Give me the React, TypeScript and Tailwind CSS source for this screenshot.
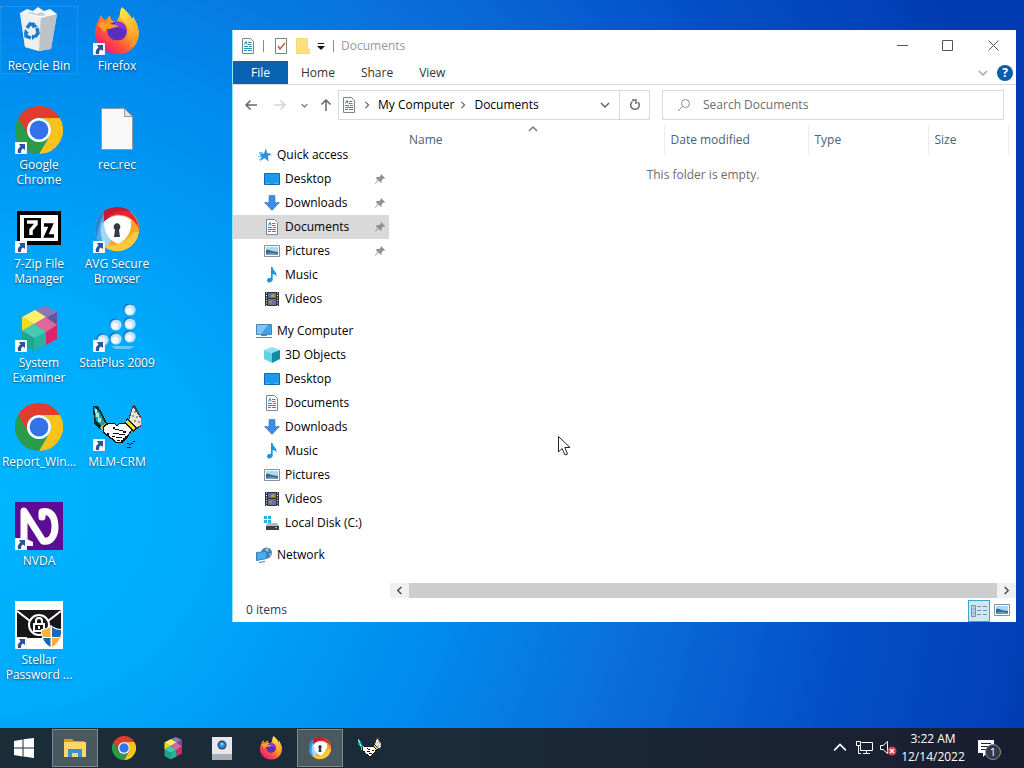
import type { ReactNode } from "react";
import clsx from "clsx";

type IconProps = { className?: string };

const Chrome = ({ className }: IconProps) => (
  <svg viewBox="0 0 48 48" className={className}>
    <path fill="#e33b2e" d="M3.2 12A24 24 0 0 1 44.8 12H24A12 12 0 0 0 13.6 30Z" />
    <path fill="#fcc21b" d="M44.8 12A24 24 0 0 1 24 48L34.4 30A12 12 0 0 0 24 12Z" />
    <path fill="#2a9b48" d="M24 48A24 24 0 0 1 3.2 12L13.6 30A12 12 0 0 0 34.4 30Z" />
    <circle cx="24" cy="24" r="12" fill="#fff" />
    <circle cx="24" cy="24" r="9.4" fill="#3273ea" />
  </svg>
);

const Firefox = ({ className }: IconProps) => (
  <svg viewBox="0 0 48 48" className={className}>
    <defs>
      <linearGradient id="fxBody" x1="0.85" y1="0.1" x2="0.2" y2="0.95">
        <stop offset="0" stopColor="#ffe23c" />
        <stop offset="0.4" stopColor="#ff9a28" />
        <stop offset="0.7" stopColor="#ff4f3f" />
        <stop offset="1" stopColor="#e7187c" />
      </linearGradient>
      <linearGradient id="fxTail" x1="0" y1="0" x2="0.6" y2="1">
        <stop offset="0" stopColor="#fff04a" />
        <stop offset="1" stopColor="#ff9a28" />
      </linearGradient>
    </defs>
    <path fill="url(#fxBody)" d="M8 8C9 11 11 13 13 13L17 8C17 12 19 14 23 15C26 12 27 6 29 1C35 4 36 9 38 12L40 11C46 18 48 28 43 37C38 45 31 48 23 47C10 46 2 37 2 26C2 19 5 15 8 8Z" />
    <path fill="url(#fxTail)" d="M29 0C26 5 26 10 31 14C37 19 38 26 35 32C39 29 40 24 39 20C43 28 41 36 36 41C46 35 48 22 42 13L40 9L40 14C38 8 34 5 29 0Z" />
    <path fill="#5a2fc0" d="M14 22C16 16 22 13 28 15C33 17 35 23 33 28C31 33 26 34 21 33C16 31 14 27 14 22Z" />
    <path fill="#8c38d6" d="M22 15C27 13 33 17 33 24C30 20 26 21 22 20Z" />
    <path fill="#ff9b2b" d="M5 18C8 13 14 15 17 17C21 18 24 17 25 20C20 20 19 22 15 22C13 22 12 23 11 25C9 23 7 20 5 18Z" />
  </svg>
);

const Avg = ({ className }: IconProps) => (
  <svg viewBox="0 0 48 48" className={className}>
    <circle cx="24" cy="24" r="22" fill="#f7a52e" />
    <path fill="#4aa9e8" d="M24 24L13 5A22 22 0 0 0 8 39.500Z" />
    <path fill="#9fd6f3" d="M24 24L9 17C6 27 8 36 14 43Z" />
    <path fill="#2d82d6" d="M13 5A22 22 0 0 0 4 33C5 22 8 13 13 5Z" />
    <path fill="#fbc93c" d="M8 39C22 43 33 38 40 27L46 27A22 22 0 0 1 10 41Z" />
    <path fill="#e5233c" d="M11 6C21 -1 43 1 46 24C42 15 36 11 28 10C22 9 17 11 11 17Z" />
    <path fill="#c31a36" d="M11 6C20 0 32 1 38 7C29 4 18 6 11 17Z" />
    <path fill="#fff" d="M11 17C18 9 31 9 38 15C39 26 35 34 25 39C16 35 11 28 11 17Z" />
    <path fill="#333a40" d="M24 18A4 4 0 0 1 26 25L27 32H21L22 25A4 4 0 0 1 24 18Z" />
  </svg>
);

const Hexagon = ({ className }: IconProps) => (
  <svg viewBox="0 0 48 48" className={className}>
    <path fill="#8f77b5" d="M20 6L30 2L42 8L31 14Z" />
    <path fill="#5f55a0" d="M31 14L42 8V21Z" />
    <path fill="#fff06a" d="M7 13L20 6L31 13L19 20Z" />
    <path fill="#f2dc1c" d="M7 13L19 20L7 27Z" />
    <path fill="#e0679c" d="M19 20L31 13L42 21L31 28Z" />
    <path fill="#dd2468" d="M31 28L42 21V35L31 41Z" />
    <path fill="#46c9b1" d="M7 27L19 20L31 28L19 34Z" />
    <path fill="#1da58e" d="M7 27L19 34V47L7 40Z" />
    <path fill="#26b59c" d="M19 34L31 28V41L19 47Z" />
  </svg>
);

const Handshake = ({ className }: IconProps) => (
  <svg viewBox="0 0 48 48" shapeRendering="crispEdges" className={className}>
    <path fill="#0a2c2e" d="M0 3H5L8 8L11 14L14 20L11 26H6L1 20Z" />
    <path fill="#19a19a" d="M1 4L6 8L9 14L12 20L9 23L3 18Z" />
    <path fill="#9df0e5" d="M2 6H4V10H6V15H8V19H5V14H3V10H2Z" />
    <path fill="#444" d="M40 2H42L49 16V23L44 26L35 20L36 13Z" />
    <path fill="#e9e6dc" d="M40 4L48 16V22L44 24L36 18Z" />
    <path fill="#999" d="M41 8H43V10H41ZM39 12H41V14H39ZM43 13H45V15H43ZM41 17H43V19H41ZM45 18H47V20H45Z" />
    <path fill="#222" d="M34 15L44 25L40 29L32 20Z" />
    <path fill="#f3df20" d="M34 17L42 25L40 27L33 20Z" />
    <path fill="#d9c11c" d="M7 24L13 20L14 23L9 27Z" />
    <path fill="#111" d="M10 23L15 20H21L24 22L27 20H33L39 27L35 34L29 40H22L18 36L10 30Z" />
    <path fill="#fff" d="M11 24L16 21H21L24 23L27 21H32L38 27L34 33H32V35H30V37H28V39H23L19 35L11 29Z" />
    <path fill="#111" d="M20 24H22V26H20ZM22 26H26V27H22ZM26 27H30V28H26ZM30 28H33V30H30ZM20 30H26V31H20ZM26 31H32V32H26ZM19 33H22V34H19ZM23 34H29V35H23ZM24 37H27V38H24ZM14 30H16V32H14Z" />
    <path fill="#123" d="M34 40H36V41H34ZM36 41H38V42H36ZM38 40H40V41H38ZM40 38H42V39H40ZM34 44H38V45H34Z" />
  </svg>
);

const RecycleBin = ({ className }: IconProps) => (
  <svg viewBox="0 0 48 48" className={className}>
    <path fill="#d5dade" d="M5 6L42 7L36 42L24 44L10 40Z" />
    <path fill="#eceff0" d="M5 6L26 10L24 44L10 40Z" />
    <path fill="#bcc3c8" d="M26 10L42 7L36 42L24 44Z" />
    <path fill="#f6f7f7" d="M5 6L12 2L18 4L23 0L29 4L35 2L42 7L26 11Z" />
    <path fill="#c3ced5" d="M12 6L17 5L21 7L27 5L31 8L25 9Z" />
    <path fill="none" stroke="#1c7ccc" strokeWidth="3.500" d="M12 21L15 17L20 18M22 21L23 26L20 30M16 31L11 29L11 25" />
    <path fill="#1c7ccc" d="M18 15L23 20L17 21ZM23 28L17 33L17 28ZM9 27L10 22L14 26Z" />
  </svg>
);

const SevenZip = ({ className }: IconProps) => (
  <svg viewBox="0 0 48 48" className={className}>
    <path fill="#000" d="M2 6H46V40H2Z" />
    <path fill="#fff" d="M5 10H43V36H5Z" />
    <path fill="#000" d="M9 13H26V33H9Z" />
    <path fill="none" stroke="#fff" strokeWidth="3.500" d="M12 17H21V19L16 25V30" />
    <path fill="none" stroke="#000" strokeWidth="3.500" d="M29 20H36L31 31H39" />
  </svg>
);

const Stats = ({ className }: IconProps) => (
  <svg viewBox="0 0 48 48" className={className}>
    {[[37, 6], [23, 21], [37, 20], [10, 36], [23, 35], [37, 33]].map(([x, y]) => (
      <g key={`${x}-${y}`}>
        <circle cx={x - 1} cy={y - 1} r="5.500" fill="#1565b0" />
        <circle cx={x} cy={y} r="5.600" fill="#bfe2f8" />
        <circle cx={x - 1} cy={y + 1} r="3.500" fill="#f0f9ff" />
      </g>
    ))}
    <path fill="#5fcaff" d="M18 42H42L37 45H22Z" />
  </svg>
);

const Nvda = ({ className }: IconProps) => (
  <svg viewBox="0 0 48 48" className={className}>
    <path fill="#5c0d94" d="M0 0H48V48H0Z" />
    <path fill="none" stroke="#fff" strokeWidth="7" strokeLinecap="round" strokeLinejoin="round" d="M9 38V9L28 39C36 41 40 33 40 25C40 14 35 8 27 10V15" />
    <path fill="#fff" d="M12 37L18 40V44H12Z" />
  </svg>
);

const Stellar = ({ className }: IconProps) => (
  <svg viewBox="0 0 48 48" className={className}>
    <path fill="#fff" d="M0 0H48V48H0Z" />
    <path fill="#171717" d="M2 9H46V37H2Z" />
    <path fill="none" stroke="#fff" strokeWidth="2" d="M2 10L15 20M46 10L33 20" />
    <circle cx="24" cy="24" r="10" fill="#171717" stroke="#fff" strokeWidth="2" />
    <path fill="none" stroke="#fff" strokeWidth="2" d="M19 23H29V30H19ZM21 23V20A3 3 0 0 1 27 20V23M24 25V28" />
    <path fill="#fff" d="M26 28C30 28 34 26 36 24C38 26 42 28 47 28C47 38 43 44 36 48C29 44 26 38 26 28Z" />
    <path fill="#f9b234" d="M27 29C30 29 33 27 35.500 26V36H28C27 34 27 31 27 29Z" />
    <path fill="#1667bd" d="M37 26C39 28 42 29 46 29C46 32 46 34 45 36H37ZM28 37H35.500V46C32 44 29 41 28 37Z" />
    <path fill="#f9b234" d="M37 37H45C43 41 41 44 37 46Z" />
  </svg>
);

const BlankFile = ({ className }: IconProps) => (
  <svg viewBox="0 0 48 48" className={className}>
    <path fill="#f9f9f9" stroke="#8c9aa5" d="M8.500 2.500H31.500L39.500 10.500V43.500H8.500Z" />
    <path fill="#dde2e6" stroke="#8c9aa5" d="M31.500 2.500V10.500H39.500Z" />
  </svg>
);

const DocIcon = ({ className = "size-4" }: IconProps) => (
  <svg viewBox="0 0 16 16" className={className}>
    <path fill="#fff" stroke="#7b858c" d="M2.500 .5H10.500L13.500 3.500V15.500H2.500Z" />
    <path stroke="#2b8fb8" d="M8 4.500H11.500M8 6.500H11.500M4 8.500H8M9 8.500H12M4 10.500H12M4 12.500H7M8 12.500H12" />
    <path fill="none" stroke="#2b7fa8" d="M4.500 6.500L6 3.500L7 6.500" />
  </svg>
);

const DesktopIcon = () => (
  <svg viewBox="0 0 16 16" className="size-4">
    <path fill="#1b9cf0" stroke="#1667a8" d="M.5 2.500H15.500V13.500H.5Z" />
    <path stroke="#8fd3ff" strokeDasharray="1 1" d="M2 12.500H5M11 12.500H14" />
  </svg>
);

const DownloadIcon = () => (
  <svg viewBox="0 0 16 16" className="size-4">
    <path fill="#3d8ee0" stroke="#3478bc" strokeWidth=".6" d="M5 .5H11V7.500H15.500L8 15.500L.5 7.500H5Z" />
  </svg>
);

const PictureIcon = () => (
  <svg viewBox="0 0 16 16" className="size-4">
    <path fill="#fff" stroke="#85929c" d="M.5 2.500H15.500V13.500H.5Z" />
    <path fill="#a9d7f5" d="M2 4H14V12H2Z" />
    <path fill="#38658c" d="M2 7C5 6 7 9 14 9V12H2Z" />
    <path fill="#7798b0" d="M2 11C6 9 10 10 14 11V12H2Z" />
  </svg>
);

const MusicIcon = () => (
  <svg viewBox="0 0 16 16" className="size-4">
    <path fill="#1c94db" d="M7 0H8.500C9 4 13 4 12.500 10C12 8 10.500 7 8.700 7V13C8 16 3 16.500 3 13.500C3 11 6 10.500 7 11Z" />
  </svg>
);

const VideoIcon = () => (
  <svg viewBox="0 0 16 16" className="size-4">
    <path fill="#30343a" d="M1 1H15V15H1Z" />
    <path fill="#5a6fa5" d="M4 2H12V7H4Z" />
    <path fill="#6b6f9c" d="M4 8H12V14H4Z" />
    <path fill="#c89a3a" d="M7 4L10 3L11 6H7ZM5 11L8 10L7 13Z" />
    <path stroke="#eee" strokeDasharray="1 1.500" d="M2.500 1.500V15M13.500 1.500V15" />
  </svg>
);

const CubeIcon = () => (
  <svg viewBox="0 0 16 16" className="size-4">
    <path fill="#8be2f1" d="M0 3L8 0L16 3L8 6Z" />
    <path fill="#5fd3e6" d="M0 3L8 6V16L0 12Z" />
    <path fill="#128ca8" d="M8 6L16 3V12L8 16Z" />
  </svg>
);

const DiskIcon = () => (
  <svg viewBox="0 0 16 16" className="size-4">
    <path fill="#27b3d6" d="M0 1H3V4H0ZM4 1H7V4H4ZM0 5H3V8H0ZM4 5H7V8H4Z" />
    <path fill="#b4b8ba" d="M3 8H13L15 11H2Z" />
    <path fill="#3d4244" d="M2 11H15V15H2Z" />
    <path fill="#61e08a" d="M11 12H13V13H11Z" />
  </svg>
);

const StarIcon = () => (
  <svg viewBox="0 0 16 16" className="size-4">
    <path fill="#2f8fdd" d="M10 1L11 6L16 7L12 9L12.500 14.500L8.500 11L4 14L5.500 9.500L3 6.500H8Z" />
    <path stroke="#79b9ea" d="M2 9.500H6M3 12.500H5M3 5.500H7" />
  </svg>
);

const ComputerIcon = () => (
  <svg viewBox="0 0 16 16" className="size-4">
    <path fill="#3ba2ec" stroke="#4b87b5" d="M.5 1.500H15.500V11.500H.5Z" />
    <path fill="#7cc7fa" d="M1 2H12L5 11H1Z" />
    <path stroke="#6b7f8e" d="M5 12.500H11M0 14.500H16" />
  </svg>
);

const NetworkIcon = () => (
  <svg viewBox="0 0 16 16" className="size-4">
    <circle cx="10.500" cy="6" r="5.500" fill="#4c7fa8" />
    <path fill="#8cc4ea" d="M9 2L12 1L13 4L10 5ZM13 7L16 6L14 10Z" />
    <path fill="#48aef2" stroke="#3f7dab" d="M.5 5.500L10.500 4.500V11.500L.5 13.500Z" />
    <path stroke="#3f7dab" d="M3 15.500L9 14.500" />
  </svg>
);

const PinIcon = () => (
  <svg viewBox="0 0 12 12" className="size-3">
    <path fill="#8b949b" d="M7 1L11 5L10 6L9 5.500L7.500 8L7.500 10L6 9L4 7.500L1.500 11L1 10.500L3.500 7L2 5L2.500 4L5 4L7 2.500L6.500 1.500Z" />
  </svg>
);

const Chevron = ({ className, d = "M1 3L5 7L9 3" }: IconProps & { d?: string }) => (
  <svg viewBox="0 0 10 10" fill="none" stroke="currentColor" strokeWidth="1.500" className={clsx("shrink-0", className)}>
    <path d={d} />
  </svg>
);

const Shortcut = () => (
  <svg viewBox="0 0 12 12" className="absolute bottom-0 left-0 size-3">
    <path fill="#fff" stroke="#b9c4cf" strokeWidth=".5" d="M0 0H12V12H0Z" />
    <path fill="#29549b" d="M4 2H10V8L8 6.500C6 7.500 6 9 6 11H3C2 8 3.500 6 5.500 4.500Z" />
  </svg>
);

const desktopIcons = [
  { name: "Recycle Bin", icon: RecycleBin, plain: true, focused: true },
  { name: "Google Chrome", icon: Chrome },
  { name: "7-Zip File Manager", icon: SevenZip },
  { name: "System Examiner", icon: Hexagon },
  { name: "Report_Win...", icon: Chrome, plain: true },
  { name: "NVDA", icon: Nvda },
  { name: "Stellar Password ...", icon: Stellar },
  { name: "Firefox", icon: Firefox },
  { name: "rec.rec", icon: BlankFile, plain: true },
  { name: "AVG Secure Browser", icon: Avg },
  { name: "StatPlus 2009", icon: Stats },
  { name: "MLM-CRM", icon: Handshake },
];

const sections = [
  {
    name: "Quick access",
    icon: <StarIcon />,
    items: [
      { name: "Desktop", icon: <DesktopIcon />, pinned: true },
      { name: "Downloads", icon: <DownloadIcon />, pinned: true },
      { name: "Documents", icon: <DocIcon />, pinned: true, active: true },
      { name: "Pictures", icon: <PictureIcon />, pinned: true },
      { name: "Music", icon: <MusicIcon /> },
      { name: "Videos", icon: <VideoIcon /> },
    ],
  },
  {
    name: "My Computer",
    icon: <ComputerIcon />,
    items: [
      { name: "3D Objects", icon: <CubeIcon /> },
      { name: "Desktop", icon: <DesktopIcon /> },
      { name: "Documents", icon: <DocIcon /> },
      { name: "Downloads", icon: <DownloadIcon /> },
      { name: "Music", icon: <MusicIcon /> },
      { name: "Pictures", icon: <PictureIcon /> },
      { name: "Videos", icon: <VideoIcon /> },
      { name: "Local Disk (C:)", icon: <DiskIcon /> },
    ],
  },
  { name: "Network", icon: <NetworkIcon />, items: [] },
] as {
  name: string;
  icon: ReactNode;
  items: { name: string; icon: ReactNode; pinned?: boolean; active?: boolean }[];
}[];

const DesktopIcons = () => (
  <div className="grid shrink-0 grid-flow-col grid-cols-[78px_78px] grid-rows-[repeat(7,99px)]">
    {desktopIcons.map(({ name, icon: Icon, plain, focused }) => (
      <button key={name} className="flex flex-col items-center pt-[6px] text-center">
        <span className={clsx("flex w-full flex-col items-center border", focused ? "border-dotted border-[#7d8a94]" : "border-transparent")}>
          <span className="relative">
            <Icon className="size-12" />
            {!plain && <Shortcut />}
          </span>
          <span className="mt-[3px] max-w-[76px] leading-[15px] text-white [text-shadow:0_1px_2px_rgba(0,0,0,0.6)]">
            {name}
          </span>
        </span>
      </button>
    ))}
  </div>
);

const TitleBar = () => (
  <header className="flex h-[31px] items-center pl-[7px]">
    <DocIcon />
    <span className="ml-[7px] h-3 w-px bg-[#8a8a8a]" />
    <button aria-label="Properties" className="ml-[9px]">
      <svg viewBox="0 0 16 16" className="size-4">
        <path fill="#fff" stroke="#7b7f86" d="M2.500 .5H13.500V15.500H2.500Z" />
        <path fill="none" stroke="#c45c38" strokeWidth="1.500" d="M5 8L7 11L12 5" />
      </svg>
    </button>
    <button aria-label="New folder" className="ml-[7px]">
      <svg viewBox="0 0 16 16" className="size-4">
        <path fill="#ffdf7e" stroke="#eec75c" strokeWidth=".6" d="M.5 .5H11.500V10L13.500 11V15.500H.5Z" />
      </svg>
    </button>
    <button aria-label="Customize toolbar" className="ml-[5px]">
      <svg viewBox="0 0 8 8" className="size-2">
        <path fill="#111" d="M1 1H7V2H1ZM0 4H8L4 8Z" />
      </svg>
    </button>
    <span className="ml-2 h-3 w-px bg-[#8a8a8a]" />
    <h1 className="ml-[7px] text-[#999]">Documents</h1>
    <div className="ml-auto flex h-full text-[#555]">
      <button aria-label="Minimize" className="grid w-[45px] place-items-center">
        <svg viewBox="0 0 11 11" fill="none" stroke="currentColor" className="size-[11px]">
          <path d="M0 5.500H11" />
        </svg>
      </button>
      <button aria-label="Maximize" className="grid w-[45px] place-items-center">
        <svg viewBox="0 0 11 11" fill="none" stroke="currentColor" className="size-[11px]">
          <path d="M.5 .5H10.500V10.500H.5Z" />
        </svg>
      </button>
      <button aria-label="Close" className="grid w-[46px] place-items-center">
        <svg viewBox="0 0 11 11" fill="none" stroke="currentColor" className="size-[11px]">
          <path d="M.5 .5L10.500 10.500M10.500 .5L.5 10.500" />
        </svg>
      </button>
    </div>
  </header>
);

const Ribbon = () => (
  <div className="flex h-6 items-stretch border-b border-[#dadbdc] text-[#333]">
    <button className="w-[55px] bg-[#0763b1] text-white">File</button>
    <button className="px-[13px]">Home</button>
    <button className="px-[13px]">Share</button>
    <button className="px-[13px]">View</button>
    <div className="ml-auto flex items-center gap-[9px] pr-[3px]">
      <button aria-label="Expand ribbon" className="text-[#a5a5a5]">
        <Chevron className="size-[10px]" />
      </button>
      <button aria-label="Help" className="size-4 rounded-full bg-[#0a5ca8] text-[12px] leading-4 font-bold text-white">
        ?
      </button>
    </div>
  </div>
);

const AddressRow = () => (
  <div className="flex h-[35px] items-end pr-3 pl-1 text-[#666]">
    <div className="flex h-[30px] items-center">
      <button aria-label="Back" className="grid w-7 place-items-center">
        <svg viewBox="0 0 12 12" fill="none" stroke="#666" strokeWidth="1.500" className="size-3">
          <path d="M12 6H1M5.500 1.500L1 6L5.500 10.500" />
        </svg>
      </button>
      <button aria-label="Forward" className="grid w-[30px] place-items-center">
        <svg viewBox="0 0 12 12" fill="none" stroke="#d2d2d2" strokeWidth="1.500" className="size-3">
          <path d="M0 6H11M6.500 1.500L11 6L6.500 10.500" />
        </svg>
      </button>
      <button aria-label="Recent locations" className="grid w-[18px] place-items-center">
        <Chevron className="size-[7px]" />
      </button>
      <button aria-label="Up" className="grid w-[25px] place-items-center">
        <svg viewBox="0 0 12 12" fill="none" stroke="#666" strokeWidth="1.500" className="size-3">
          <path d="M6 12V1M1.500 5.500L6 1L10.500 5.500" />
        </svg>
      </button>
    </div>
    <div className="flex h-[30px] flex-1 items-center border border-[#d9d9d9] pl-[2px]">
      <DocIcon />
      <Chevron className="ml-[6px] size-2" d="M3 1L7 5L3 9" />
      <button className="ml-[7px] whitespace-nowrap text-black">My Computer</button>
      <Chevron className="ml-[5px] size-2" d="M3 1L7 5L3 9" />
      <button className="ml-[7px] text-black">Documents</button>
      <button aria-label="Previous locations" className="mr-[9px] ml-auto">
        <Chevron className="size-[10px]" />
      </button>
      <button aria-label="Refresh" className="grid h-full w-[30px] place-items-center border-l border-[#d9d9d9]">
        <svg viewBox="0 0 12 12" fill="none" stroke="#666" strokeWidth="1.500" className="size-3">
          <path d="M3.500 2.500A4.300 4.300 0 1 0 9 3M3 1H7V5" />
        </svg>
      </button>
    </div>
    <label className="ml-3 flex h-[30px] w-[342px] items-center border border-[#d9d9d9] pl-[14px]">
      <svg viewBox="0 0 14 14" fill="none" stroke="#8b8b8b" className="size-[14px]">
        <circle cx="8.500" cy="5.500" r="4" />
        <path d="M5.500 8.500L1 13" />
      </svg>
      <input type="search" aria-label="Search Documents" placeholder="Search Documents" className="ml-3 min-w-0 flex-1 outline-none placeholder:text-[#6d6d6d]" />
    </label>
  </div>
);

const NavPane = () => (
  <nav className="w-[157px] shrink-0 pt-[23px] pr-px text-black">
    {sections.map((section) => (
      <div key={section.name} className="mb-2">
        <a href="#" className="flex h-6 items-center gap-[5px] pl-[23px]">
          {section.icon}
          {section.name}
        </a>
        {section.items.map((item) => (
          <a key={item.name} href="#" className={clsx("flex h-6 items-center gap-[5px] pr-[3px] pl-[31px] whitespace-nowrap", item.active && "bg-[#d9d9d9]")}>
            {item.icon}
            <span className="flex-1">{item.name}</span>
            {item.pinned && <PinIcon />}
          </a>
        ))}
      </div>
    ))}
  </nav>
);

const FileList = () => (
  <section className="flex min-w-0 flex-1 flex-col pt-[5px]">
    <table className="w-full table-fixed border-collapse text-left">
      <thead>
        <tr className="h-[30px] text-[#4c607a]">
          <th className="relative border-r border-[#ececec] pl-[19px] font-normal">
            Name
            <Chevron className="absolute top-0 left-[138px] size-[10px] text-[#777]" d="M1 6L5 2L9 6" />
          </th>
          <th className="w-36 border-r border-[#ececec] pl-[6px] font-normal">Date modified</th>
          <th className="w-[120px] border-r border-[#ececec] pl-[6px] font-normal">Type</th>
          <th className="w-20 border-r border-[#ececec] pl-[6px] font-normal">Size</th>
          <th className="w-2" aria-hidden="true" />
        </tr>
      </thead>
      <tbody>
        <tr className="h-10">
          <td colSpan={5} className="text-center text-[#6d6d6d]">This folder is empty.</td>
        </tr>
      </tbody>
    </table>
    <div className="mt-auto flex h-[15px] items-stretch bg-[#f0f0f0] text-[#444]">
      <button aria-label="Scroll left" className="grid w-[19px] place-items-center">
        <Chevron className="size-[9px]" d="M7 1L3 5L7 9" />
      </button>
      <div className="flex-1 bg-[#cdcdcd]" />
      <button aria-label="Scroll right" className="grid w-[19px] place-items-center">
        <Chevron className="size-[9px]" d="M3 1L7 5L3 9" />
      </button>
    </div>
  </section>
);

const StatusBar = () => (
  <footer className="flex h-6 items-end pr-2 pl-[13px] text-[#1e3a63]">
    <span className="flex-1 pb-1">0 items</span>
    <button aria-label="Details view" className="grid size-[22px] place-items-center border border-[#3ba5cf] bg-[#cce8f6]">
      <svg viewBox="0 0 16 14" fill="none" className="h-[14px] w-4">
        <path stroke="#7f8d99" d="M.5 1.500H4.500V12.500H.5ZM.5 5H4.500M.5 9H4.500M6 2.500H10M12 2.500H16M6 6.500H10M12 6.500H16M6 10.500H10M12 10.500H16" />
        <path stroke="#cc6150" d="M2 3H3M2 7H3M2 11H3" />
      </svg>
    </button>
    <button aria-label="Thumbnail view" className="ml-1 w-[14px] pb-1">
      <PictureIcon />
    </button>
  </footer>
);

const ExplorerIcon = () => (
  <svg viewBox="0 0 24 24" className="size-6">
    <path fill="#d99b20" d="M1 3H9L11 5H21V8H1Z" />
    <path fill="#ffd766" d="M1 6H23V21H1Z" />
    <path fill="#3c8fd2" d="M5 13H19V21H15V17H9V21H5Z" />
  </svg>
);

const DriveApp = () => (
  <svg viewBox="0 0 24 24" className="size-6">
    <path fill="#e4e7ed" d="M2 1H22V19H2Z" />
    <path fill="#a9aeb5" d="M2 18H22V24H2Z" />
    <circle cx="12" cy="9" r="4.500" fill="#2b4a66" />
    <circle cx="12" cy="9" r="3" fill="#2e95e5" />
    <path fill="#a8e0ff" d="M11 7H13V9H11Z" />
  </svg>
);

const taskButtons: { name: string; icon: ReactNode; open?: boolean }[] = [
  { name: "File Explorer", icon: <ExplorerIcon />, open: true },
  { name: "Google Chrome", icon: <Chrome className="size-6" /> },
  { name: "System Examiner", icon: <Hexagon className="size-6" /> },
  { name: "Drive", icon: <DriveApp /> },
  { name: "Firefox", icon: <Firefox className="size-6" /> },
  { name: "AVG Secure Browser", icon: <Avg className="size-6" />, open: true },
  { name: "MLM-CRM", icon: <Handshake className="size-6" /> },
];

const Taskbar = () => (
  <footer className="flex h-10 shrink-0 items-stretch bg-linear-to-r from-[#1b2d38] via-[#1b2a37] to-[#191d30] text-white">
    <button aria-label="Start" className="grid w-12 place-items-center">
      <svg viewBox="0 0 20 20" fill="#fff" className="size-5">
        <path d="M0 3L8.500 1.500V9.500H0ZM9.500 1.300L20 0V9.500H9.500ZM0 10.500H8.500V18.500L0 17ZM9.500 10.500H20V20L9.500 18.600Z" />
      </svg>
    </button>
    <div className="ml-1 flex gap-[3px] py-px">
      {taskButtons.map((button) => (
        <button key={button.name} aria-label={button.name} className={clsx("grid w-[46px] place-items-center border", button.open ? "border-[#7d8a92] bg-[#4a5860]" : "border-transparent")}>
          {button.icon}
        </button>
      ))}
    </div>
    <div className="ml-auto flex items-center pr-[25px]">
      <button aria-label="Show hidden icons">
        <Chevron className="size-3" d="M0 7L5 2L10 7" />
      </button>
      <button aria-label="Network" className="ml-[10px]">
        <svg viewBox="0 0 18 16" fill="none" stroke="#fff" className="h-4 w-[18px]">
          <path d="M5.500 2.500H16.500V10.500H4.500V6M.5 1.500H4.500V5.500H.5ZM2.500 5.500V13.500H5M10.500 10.500V13M7 13.500H14" />
        </svg>
      </button>
      <button aria-label="Volume muted" className="ml-[6px]">
        <svg viewBox="0 0 17 16" className="h-4 w-[17px]">
          <path fill="none" stroke="#fff" d="M.5 5.500H3L7.500 1.500V13.500L3 9.500H.5Z" />
          <circle cx="12" cy="11" r="4.500" fill="#d63c48" />
          <path stroke="#fff" strokeWidth="1.500" d="M10 9L14 13M14 9L10 13" />
        </svg>
      </button>
      <div className="ml-1 w-[64px] text-center leading-[18px] whitespace-nowrap">
        <div>3:22 AM</div>
        <div>12/14/2022</div>
      </div>
      <button aria-label="Notifications" className="relative ml-3 size-[22px]">
        <svg viewBox="0 0 18 18" className="size-[18px]">
          <path fill="#fff" d="M1 1H17V14H10L6 18V14H1Z" />
          <path stroke="#1a2134" d="M4 4.500H14M4 7.500H14M4 10.500H10" />
        </svg>
        <span className="absolute top-[7px] left-[8px] size-4 rounded-full border border-[#8d949c] bg-[#333a45] text-center text-[11px] leading-[14px]">1</span>
      </button>
    </div>
  </footer>
);

export default function App() {
  return (
    <div className="relative flex min-h-screen flex-col overflow-hidden bg-[radial-gradient(115%_150%_at_0%_65%,#00b6ff_0%,#00aafc_18%,#008cee_38%,#0a6fdc_54%,#0450c8_72%,#003ab2_92%)] font-['Open_Sans','Noto_Sans',sans-serif] text-[12px] leading-4">
      <div className="flex flex-1">
        <DesktopIcons />
        <main className="mt-[30px] mr-2 mb-[106px] ml-[76px] flex min-w-0 flex-1 flex-col border-l border-[#8fe4ff] bg-white">
          <TitleBar />
          <Ribbon />
          <AddressRow />
          <div className="flex flex-1">
            <NavPane />
            <FileList />
          </div>
          <StatusBar />
        </main>
      </div>
      <Taskbar />
      <svg viewBox="0 0 13 20" className="absolute top-[436px] left-[558px] h-5 w-[13px]">
        <path fill="#fff" stroke="#222" d="M.5 .5V16L4 12.500L7 19L9.500 18L6.800 11.500H12Z" />
      </svg>
    </div>
  );
}
